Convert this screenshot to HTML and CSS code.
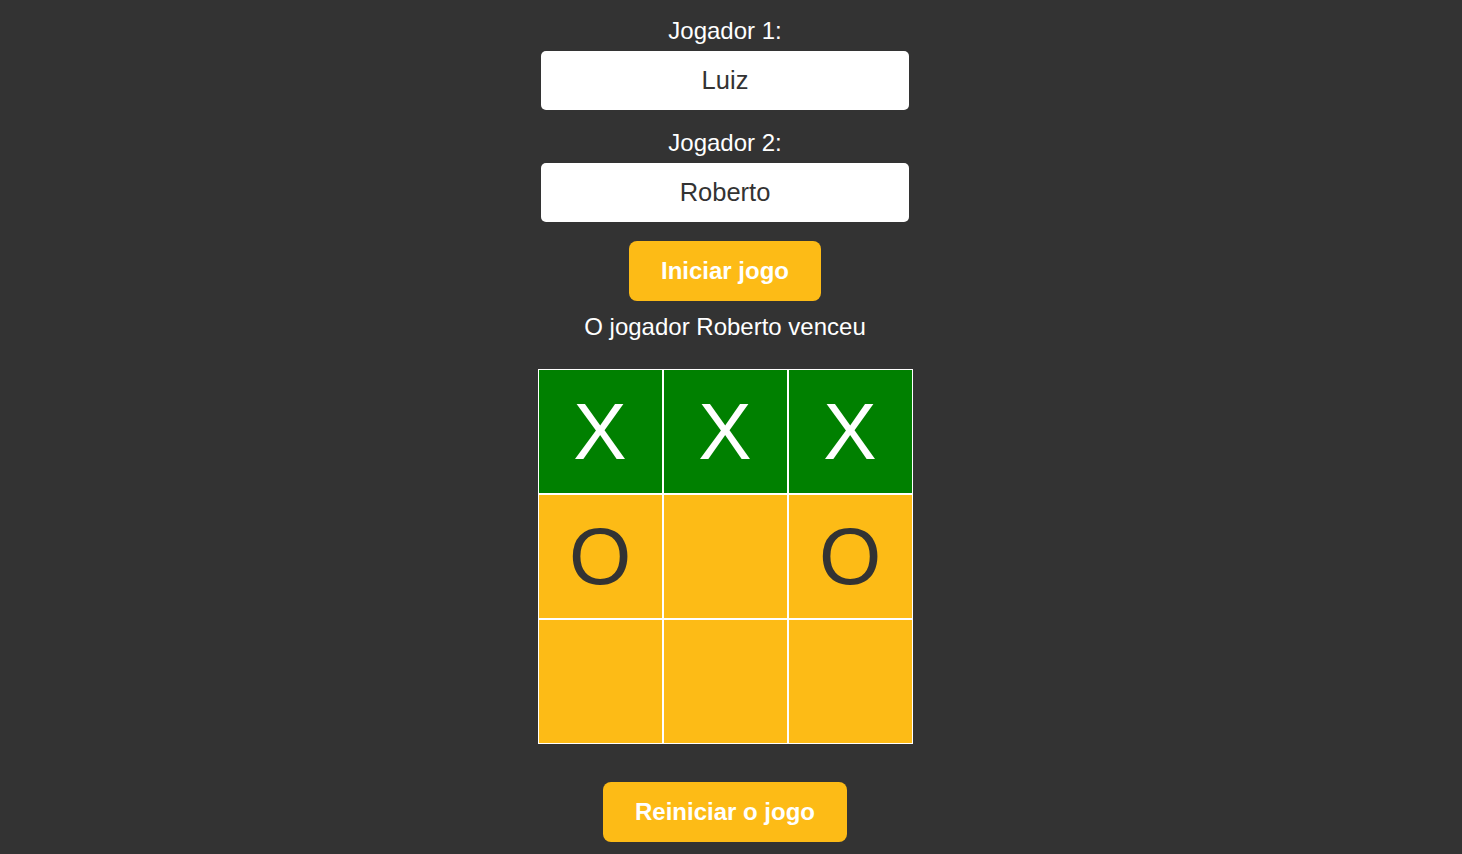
FILE: index.html
```html
<!DOCTYPE html>
<html lang="pt-BR">
<head>
<meta charset="utf-8">
<title>Jogo da Velha</title>
<link rel="stylesheet" href="styles.css">
</head>
<body>
<main class="app">
  <label class="label" for="p1">Jogador 1:</label>
  <input class="name-input" id="p1" type="text" value="Luiz">
  <label class="label label-second" for="p2">Jogador 2:</label>
  <input class="name-input" id="p2" type="text" value="Roberto">
  <button class="btn btn-start" type="button">Iniciar jogo</button>
  <p class="status">O jogador Roberto venceu</p>
  <div class="board">
    <div class="cell win">X</div>
    <div class="cell win">X</div>
    <div class="cell win">X</div>
    <div class="cell">O</div>
    <div class="cell"></div>
    <div class="cell">O</div>
    <div class="cell"></div>
    <div class="cell"></div>
    <div class="cell"></div>
  </div>
  <button class="btn btn-restart" type="button">Reiniciar o jogo</button>
</main>
</body>
</html>
```

FILE: styles.css
```css
* {
  box-sizing: border-box;
}

html, body {
  margin: 0;
  padding: 0;
  background: #333333;
  height: 100%;
}

body {
  font-family: "Liberation Sans", Arial, sans-serif;
  color: #ffffff;
  overflow: hidden;
}

.app {
  display: flex;
  flex-direction: column;
  align-items: center;
  padding-top: 17px;
  padding-right: 12px;
}

.label {
  font-size: 24px;
  line-height: 28px;
  color: #ffffff;
}

.label-second {
  margin-top: 19px;
}

.name-input {
  margin-top: 6px;
  width: 368px;
  height: 59px;
  border: none;
  border-radius: 5px;
  background: #ffffff;
  color: #333333;
  font-family: "Liberation Sans", Arial, sans-serif;
  font-size: 25.5px;
  text-align: center;
  padding: 0;
  outline: none;
}

.btn {
  height: 60px;
  border: none;
  border-radius: 8px;
  background: #fdbb16;
  color: #ffffff;
  font-family: "Liberation Sans", Arial, sans-serif;
  font-weight: bold;
  font-size: 24px;
  padding: 0;
  cursor: pointer;
}

.btn-start {
  margin-top: 19px;
  width: 192px;
}

.btn-restart {
  margin-top: 38px;
  width: 244px;
}

.status {
  margin: 12px 0 0;
  font-size: 24px;
  line-height: 28px;
}

.board {
  margin-top: 28px;
  display: grid;
  grid-template-columns: repeat(3, 123px);
  grid-template-rows: repeat(3, 123px);
  gap: 2px;
  padding: 1px;
  background: #ffffff;
}

.cell {
  background: #fdbb16;
  color: #333333;
  font-size: 80px;
  display: flex;
  align-items: center;
  justify-content: center;
  line-height: 1;
}

.cell.win {
  background: #008000;
  color: #ffffff;
}
```
